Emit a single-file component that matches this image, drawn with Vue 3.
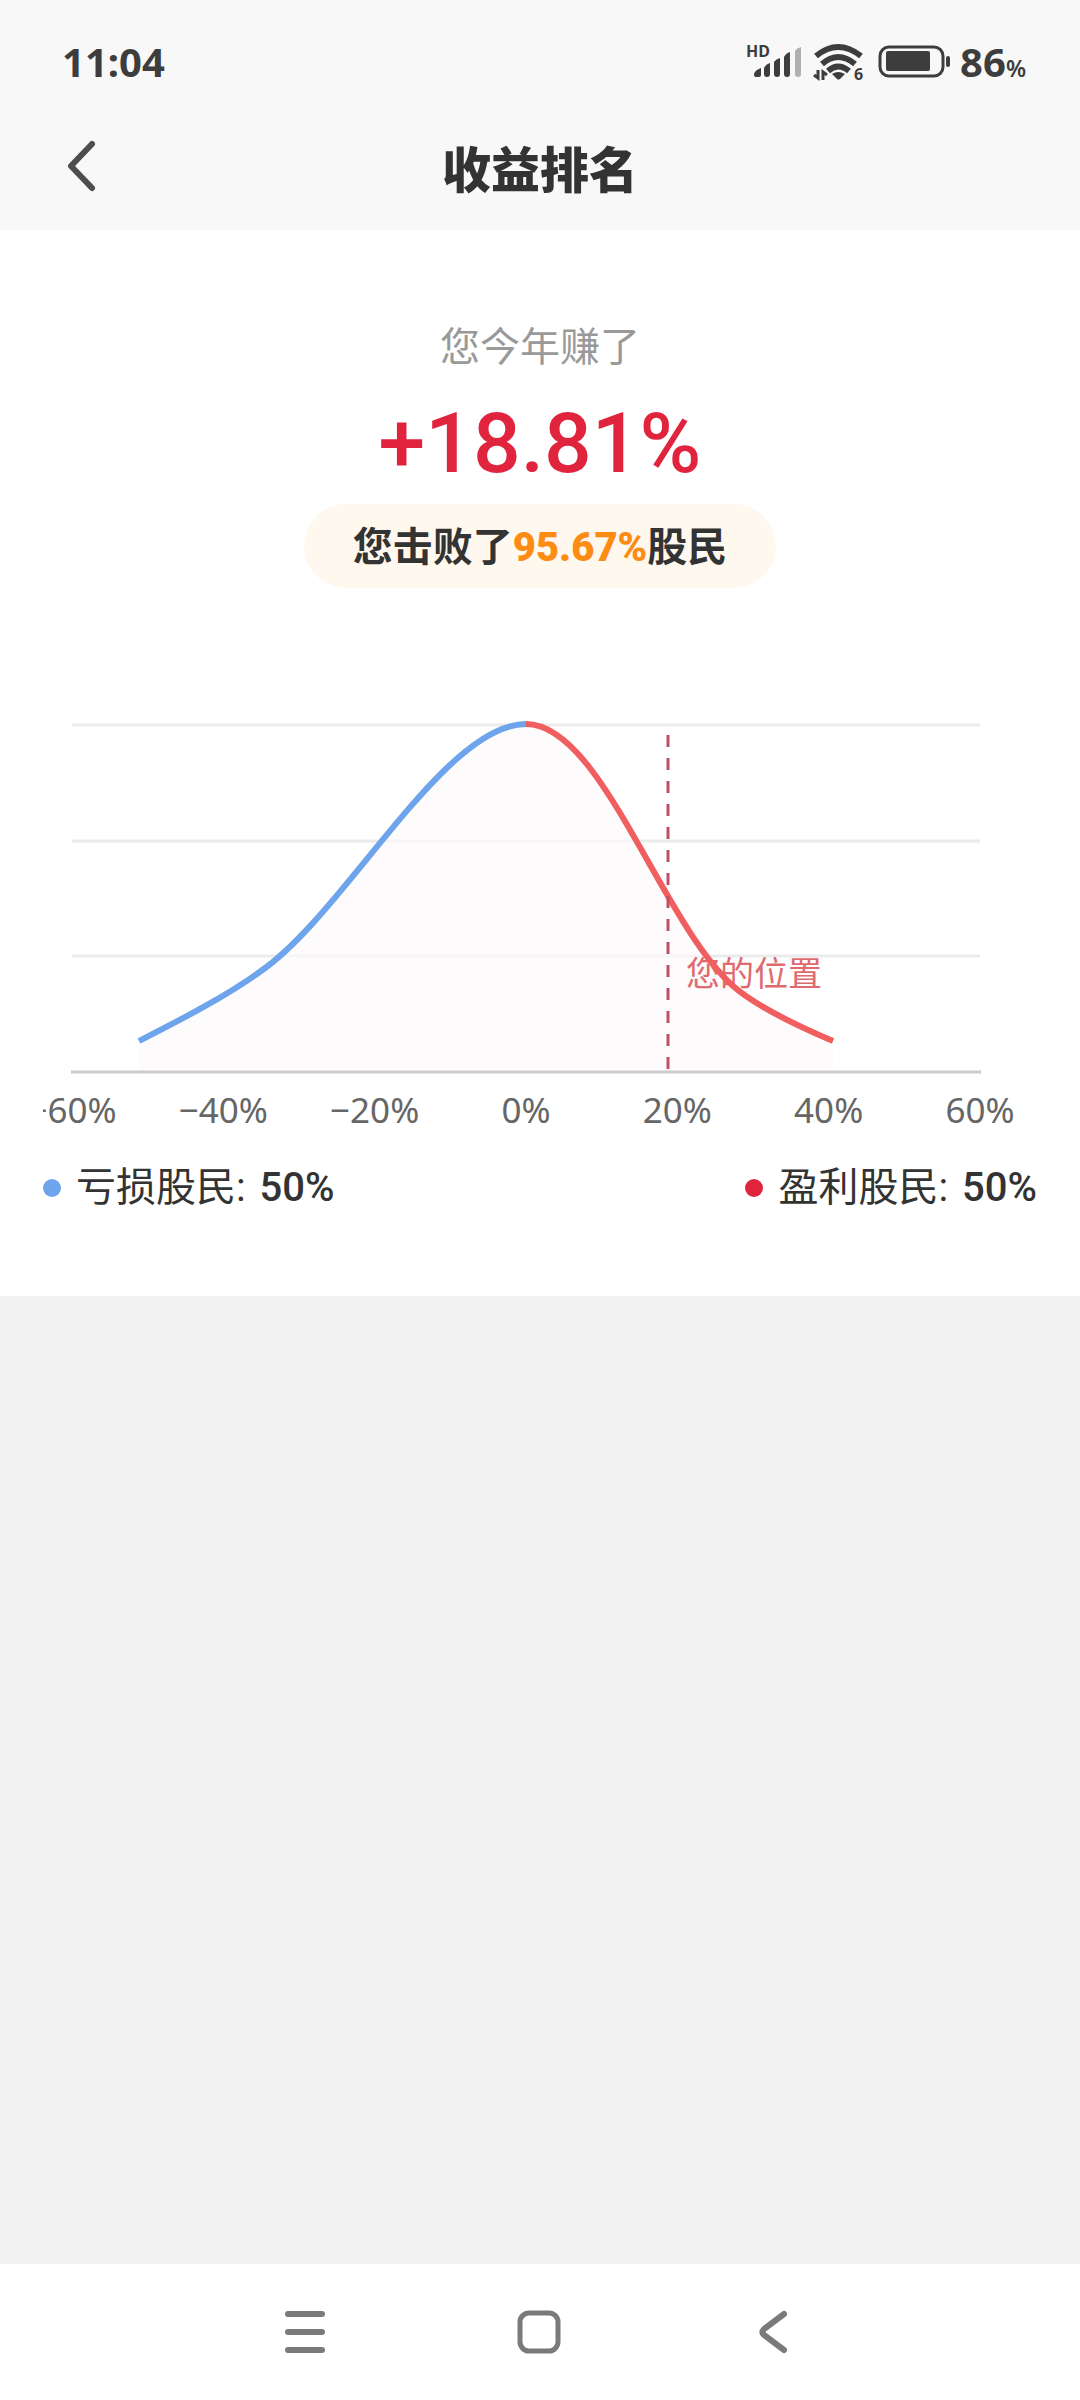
<template>
  <div class="page">
    <header class="header">
      <div class="status-bar">
        <time class="clock">11:04</time>
        <div class="status-icons">
          <svg class="signal" width="56" height="42" viewBox="0 -2 56 42">
            <text x="0" y="15" class="signal-hd">HD</text>
            <path d="M8 32 Q9 28 15 26 V33 Q15 35 13 35 H10 Q8 35 8 33Z M18 26 Q20 22 24 21 V32 Q24 35 21 35 Q18 35 18 32Z M28 20 Q30 17 34 16 V32 Q34 35 31 35 Q28 35 28 32Z M38 15 Q40 11 44 10 V32 Q44 35 41 35 Q38 35 38 32Z" fill="#3d3d3d" />
            <path d="M49 9 Q51 6 55 5 V32 Q55 35 52 35 Q49 35 49 32Z" fill="#b0b0b0" />
          </svg>
          <svg class="wifi" width="53" height="42" viewBox="0 -2 53 42">
            <g fill="none" stroke="#3d3d3d" stroke-width="6">
              <path d="M4 14 Q26 -4 49 14" />
              <path d="M10 22 Q26 8 43 22" />
              <path d="M16 29 Q26 20 37 29" />
            </g>
            <path d="M20 32 Q26 28 33 32 L28 37 Q26 38 25 37Z" fill="#3d3d3d" />
            <path d="M6 28 V36 L2 33 M11 38 V30 L15 33" fill="none" stroke="#3d3d3d" stroke-width="3" />
            <text x="42" y="38" class="wifi-six">6</text>
          </svg>
          <svg class="battery" width="75" height="42" viewBox="0 -2 75 42">
            <rect x="3" y="5" width="63" height="29" rx="9" fill="none" stroke="#3d3d3d" stroke-width="3" />
            <rect x="9" y="9" width="44" height="20" rx="2" fill="#3d3d3d" />
            <rect x="69" y="14" width="4" height="11" rx="2" fill="#3d3d3d" />
          </svg>
          <span class="level">86<small>%</small></span>
        </div>
      </div>
      <nav class="title-bar">
        <button type="button" class="back" aria-label="返回">
          <svg width="32" height="52" viewBox="0 0 32 52">
            <path d="M28 4 L7 26 L28 48" />
          </svg>
        </button>
        <h1>收益排名</h1>
      </nav>
    </header>

    <main class="card">
      <section class="summary">
        <p class="caption">您今年赚了</p>
        <p class="profit">+18.81%</p>
        <p class="beat">您击败了<strong>95.67%</strong>股民</p>
      </section>

      <svg class="chart" viewBox="0 0 994 436">
        <line v-for="y in gridLines" :key="y" x1="29" :y1="y" x2="937" :y2="y" class="grid" />
        <path :d="`${lossCurve} ${gainCurve} V371 H96 Z`" class="area" />
        <text x="643" y="286" class="here">您的位置</text>
        <line x1="28" y1="372" x2="938" y2="372" class="axis" />
        <path :d="lossCurve" class="curve loss" />
        <path :d="`M483 24 ${gainCurve}`" class="curve gain" />
        <line x1="625" y1="35" x2="625" y2="371" class="marker" />
        <text
          v-for="(tick, i) in ticks"
          :key="tick"
          :x="29 + (i * 908) / 6"
          y="423"
          class="tick"
        >{{ tick }}</text>
      </svg>

      <ul class="legend">
        <li v-for="item in legend" :key="item.label">
          <i :class="item.type"></i>
          <span>{{ item.label }}: <b>{{ item.value }}</b></span>
        </li>
      </ul>
    </main>

    <footer class="nav-bar">
      <button type="button" aria-label="最近任务">
        <svg width="48" height="48" viewBox="0 0 48 48">
          <path d="M7 6 H41 M7 24 H41 M7 42 H41" />
        </svg>
      </button>
      <button type="button" aria-label="主屏幕">
        <svg width="48" height="48" viewBox="0 0 48 48">
          <rect x="5" y="5" width="38" height="38" rx="9" />
        </svg>
      </button>
      <button type="button" aria-label="返回上一页">
        <svg width="48" height="48" viewBox="0 0 48 48">
          <path d="M35 6 L15 21 Q12 24 15 27 L35 42" />
        </svg>
      </button>
    </footer>
  </div>
</template>

<script setup>
const gridLines = [25, 141, 256];

const ticks = ['−60%', '−40%', '−20%', '0%', '20%', '40%', '60%'];

// The two halves of the distribution meet at 0%
const lossCurve = 'M96 341 C137 320 182 297 218 271 C302 213 401 24 483 24';
const gainCurve = 'C558 24 617 220 690 286 C714 307 757 327 790 341';

const legend = [
  { type: 'loss', label: '亏损股民', value: '50%' },
  { type: 'gain', label: '盈利股民', value: '50%' }
];
</script>

<style>
body {
  background: #f1f1f1;
}
</style>

<style scoped>
.page {
  min-height: 100vh;
  display: flex;
  flex-direction: column;
  font-family: Roboto, "Noto Sans CJK SC", sans-serif;
  color: #333;
}

button {
  border: 0;
  padding: 0;
  background: none;
  display: flex;
}

p,
h1,
ul {
  margin: 0;
  padding: 0;
}

.header {
  background: #f8f8f8;
}

.status-bar {
  height: 110px;
  padding: 12px 54px 0 62px;
  box-sizing: border-box;
  display: flex;
  align-items: center;
  justify-content: space-between;
  font-family: "Noto Sans", sans-serif;
  font-size: 40px;
  font-weight: 700;
  color: #3d3d3d;
}

.status-icons {
  display: flex;
  align-items: center;
}

.status-icons svg {
  overflow: visible;
}

.signal {
  margin-right: 10px;
}

.signal-hd,
.wifi-six {
  font-size: 16px;
  font-weight: 700;
  fill: #3d3d3d;
}

.wifi {
  margin-right: 12px;
}

.battery {
  margin-right: 8px;
}

.level small {
  font-size: 23px;
  font-weight: 600;
}

.title-bar {
  height: 120px;
  padding: 0 64px;
  display: grid;
  grid-template-columns: 1fr auto 1fr;
  align-items: center;
}

.back {
  padding-bottom: 8px;
}

.back path {
  fill: none;
  stroke: #4d4d4d;
  stroke-width: 6;
  stroke-linecap: round;
  stroke-linejoin: round;
}

h1 {
  padding-top: 4px;
  font-size: 49px;
  line-height: 72px;
  font-weight: 900;
}

.card {
  background: #fff;
  padding: 88px 43px 78px;
}

.summary {
  display: flex;
  flex-direction: column;
  align-items: center;
}

.caption {
  font-size: 40px;
  line-height: 60px;
  color: #999;
}

.profit {
  font-size: 84px;
  line-height: 104px;
  margin: 14px 0 8px;
  font-weight: 500;
  color: #e1243e;
}

.beat {
  padding: 14px 49px 10px;
  border-radius: 42px;
  background: #fff8ee;
  font-size: 40px;
  line-height: 60px;
  font-weight: 700;
}

.beat strong {
  color: #fc8c14;
}

.chart {
  display: block;
  width: 100%;
  margin-top: 112px;
}

.grid {
  stroke: #ebebeb;
  stroke-width: 3;
}

.axis {
  stroke: #ccc;
  stroke-width: 3;
}

.area {
  fill: #fdf9fb;
  fill-opacity: 0.7;
}

.curve {
  fill: none;
  stroke-width: 6;
}

.curve.loss {
  stroke: #6ea4eb;
}

.curve.gain {
  stroke: #f05e5f;
}

.marker {
  stroke: #bd5067;
  stroke-width: 3;
  stroke-dasharray: 12 11;
}

.here {
  font-size: 34px;
  fill: #df6b6e;
}

.tick {
  font-family: "Noto Sans", sans-serif;
  font-size: 35px;
  fill: #666;
  text-anchor: middle;
}

.legend {
  list-style: none;
  display: flex;
  justify-content: space-between;
  margin-top: 22px;
  font-size: 40px;
  line-height: 60px;
}

.legend li {
  display: flex;
  align-items: center;
  gap: 15px;
}

.legend b {
  margin-left: 4px;
  font-weight: 500;
}

.legend i {
  width: 18px;
  height: 18px;
  border-radius: 50%;
}

.legend i.loss {
  background: #6ea4eb;
}

.legend i.gain {
  background: #e1243e;
}

.nav-bar {
  margin-top: auto;
  height: 136px;
  padding: 0 190px 0 188px;
  background: #fff;
  display: flex;
  align-items: center;
  justify-content: space-around;
}

.nav-bar path,
.nav-bar rect {
  fill: none;
  stroke: #7a7a7a;
  stroke-width: 5;
  stroke-linecap: round;
}

.nav-bar path {
  stroke-width: 6;
}
</style>
